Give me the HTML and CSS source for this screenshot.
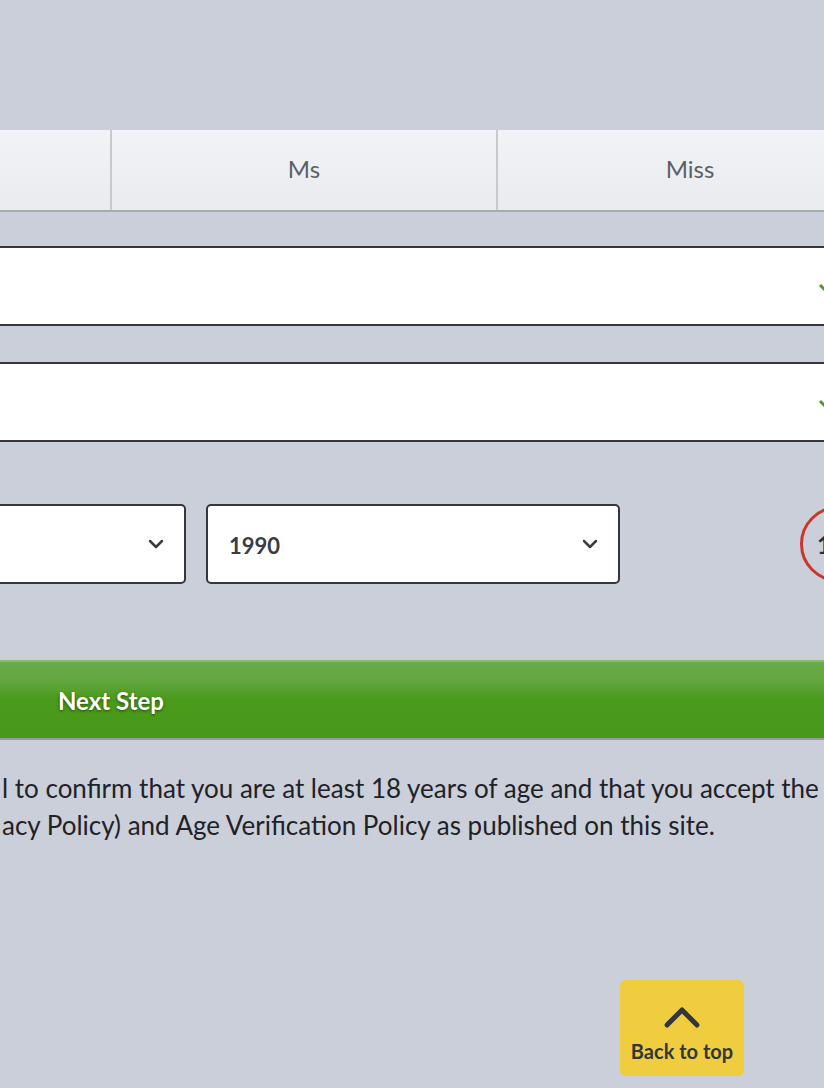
FILE: index.html
```html
<!DOCTYPE html>
<html lang="en">
<head>
<meta charset="utf-8">
<title>Registration</title>
<link rel="stylesheet" href="styles.css">
</head>
<body>
<main class="page">
  <form class="form">
    <div class="tabs">
      <div class="tab"></div>
      <div class="tab">Ms</div>
      <div class="tab">Miss</div>
    </div>
    <div class="field">
      <svg class="check" width="22" height="18" viewBox="0 0 22 18"><path d="M2 8 L8 14 L20 2" fill="none" stroke="#4c9a22" stroke-width="3"/></svg>
    </div>
    <div class="field">
      <svg class="check" width="22" height="18" viewBox="0 0 22 18"><path d="M2 8 L8 14 L20 2" fill="none" stroke="#4c9a22" stroke-width="3"/></svg>
    </div>
    <div class="dob">
      <div class="select">
        <span class="select-value"></span>
        <svg class="chev" width="16" height="10" viewBox="0 0 16 10"><path d="M2 2 L8 8 L14 2" fill="none" stroke="#3a3d44" stroke-width="2.5" stroke-linecap="round" stroke-linejoin="round"/></svg>
      </div>
      <div class="select">
        <span class="select-value">1990</span>
        <svg class="chev" width="16" height="10" viewBox="0 0 16 10"><path d="M2 2 L8 8 L14 2" fill="none" stroke="#3a3d44" stroke-width="2.5" stroke-linecap="round" stroke-linejoin="round"/></svg>
      </div>
      <div class="age">18+</div>
    </div>
    <div class="next">Next Step</div>
  </form>
  <p class="terms">l to confirm that you are at least 18 years of age and that you accept the<br>acy Policy) and Age Verification Policy as published on this site.</p>
</main>
<a class="back-top" href="#">
  <svg width="38" height="24" viewBox="0 0 38 24"><path d="M4 20 L19 5 L34 20" fill="none" stroke="#33363b" stroke-width="5" stroke-linecap="round" stroke-linejoin="round"/></svg>
  <span>Back to top</span>
</a>
</body>
</html>
```
FILE: styles.css
```css
html, body {
  margin: 0;
  padding: 0;
  background: #cbcfda;
  font-family: Lato, "Open Sans", sans-serif;
  overflow: hidden;
  width: 824px;
  height: 1088px;
}

.page {
  padding-top: 130px;
  width: 824px;
}

.form {
  margin: 0 0 0 -300px;
  width: 1200px;
  display: flex;
  flex-direction: column;
}

.tabs {
  display: flex;
  margin-left: 26px;
  height: 80px;
  border-bottom: 2px solid #a9abb3;
}

.tab {
  width: 384px;
  flex: none;
  display: flex;
  align-items: center;
  justify-content: center;
  background: linear-gradient(#f2f3f6, #eaebef);
  color: #5c5f65;
  font-size: 24px;
  padding-bottom: 3px;
  box-sizing: border-box;
}

.tab + .tab {
  border-left: 2px solid #c9c9cb;
  width: 386px;
}

.field {
  box-sizing: border-box;
  height: 80px;
  background: #fff;
  border-top: 2px solid #35373b;
  border-bottom: 2px solid #35373b;
  margin-top: 34px;
  display: flex;
  align-items: center;
  justify-content: flex-end;
  padding-right: 60px;
}

.field + .field {
  margin-top: 36px;
}

.check {
  display: block;
}

.dob {
  display: flex;
  align-items: center;
  padding-left: 72px;
  gap: 20px;
  margin-top: 62px;
}

.select {
  box-sizing: border-box;
  width: 414px;
  height: 80px;
  background: #fff;
  border: 2px solid #35373b;
  border-radius: 5px;
  display: flex;
  align-items: center;
  justify-content: space-between;
  padding: 0 20px 0 21px;
}

.select-value {
  font-weight: 700;
  font-size: 22px;
  color: #3a3d44;
  padding-top: 2px;
}

.chev {
  display: block;
}

.age {
  box-sizing: border-box;
  width: 76px;
  height: 76px;
  margin-left: 160px;
  border: 3px solid #c9372c;
  border-radius: 50%;
  display: flex;
  align-items: center;
  justify-content: center;
  font-weight: 700;
  font-size: 24px;
  color: #2b2d31;
}

.next {
  box-sizing: border-box;
  margin-top: 76px;
  height: 80px;
  background: linear-gradient(#6aaa4b 0%, #62a640 25%, #4a9a1b 50%, #489819 100%);
  border-top: 2px solid #86bd6c;
  border-bottom: 2px solid #9a9ea4;
  display: flex;
  align-items: center;
  padding-left: 358px;
  color: #fff;
  font-weight: 700;
  font-size: 24px;
  text-shadow: 0 1px 3px rgba(0, 0, 0, 0.55);
}

.terms {
  margin: 30px 0 0 2px;
  font-size: 26px;
  line-height: 37px;
  color: #1f2227;
  white-space: nowrap;
}

.back-top {
  position: fixed;
  left: 620px;
  top: 980px;
  width: 124px;
  height: 96px;
  box-sizing: border-box;
  background: #f0cd3e;
  border-radius: 6px;
  display: flex;
  flex-direction: column;
  align-items: center;
  padding-top: 25px;
  text-decoration: none;
  color: #33363b;
  font-weight: 700;
  font-size: 20px;
}

.back-top svg {
  display: block;
  margin-bottom: 10px;
}
```
